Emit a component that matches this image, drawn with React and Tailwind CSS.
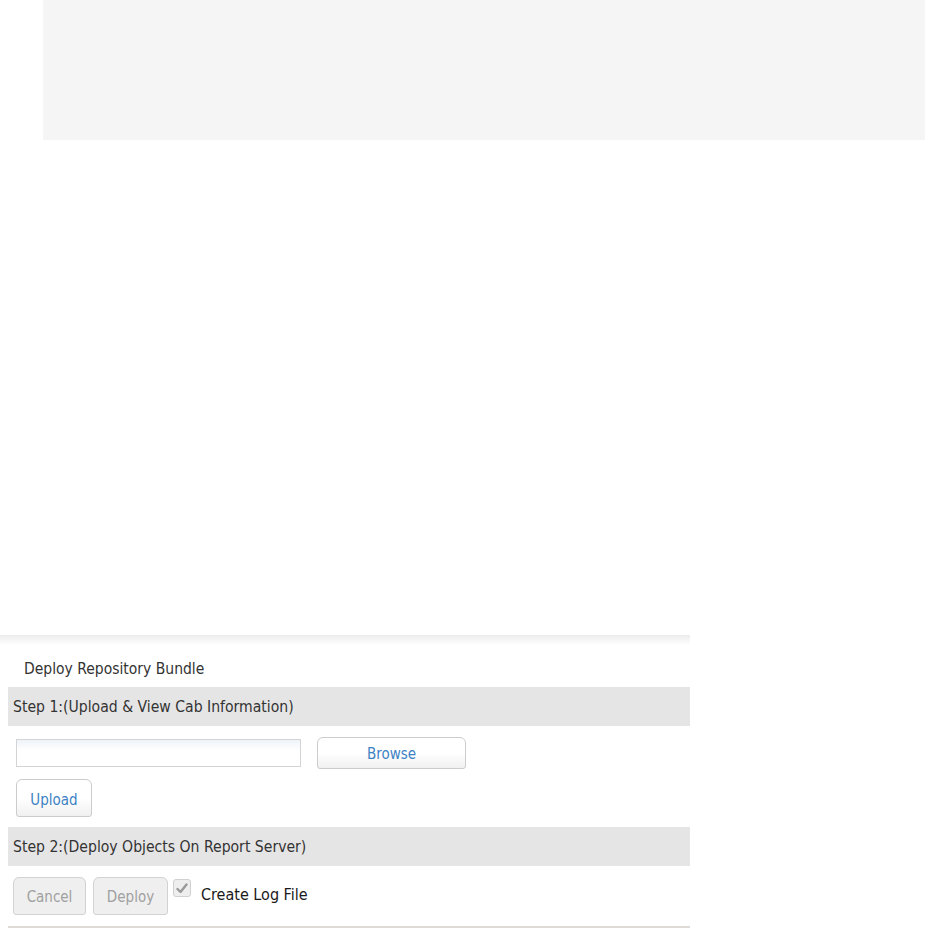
export default function App() {
  const font = { fontFamily: '"Liberation Sans Narrow", "DejaVu Sans Condensed", Roboto, sans-serif' };

  return (
    <div className="w-[925px] h-[933px] bg-white overflow-hidden relative" style={font}>
      {/* top panel */}
      <div className="ml-[43px] h-[140px] bg-[#f5f5f5]" />

      {/* deploy section */}
      <div className="mt-[495px] w-[690px]">
        <div className="h-[10px] bg-gradient-to-b from-[#ececec] to-white" />
        <div className="pl-[24px] pt-[13px] h-[42px] text-[15.5px] text-[#333]">Deploy Repository Bundle</div>

        <div className="ml-[8px] h-[39px] bg-[#e5e5e5] flex items-center pl-[5px] pt-[3px] text-[15.6px] text-[#333]">
          Step 1:(Upload &amp; View Cab Information)
        </div>

        <div className="ml-[16px] mt-[11px] flex items-center gap-[16px]">
          <input
            type="text"
            className="w-[285px] h-[28px] border border-[#d4d4d4] bg-gradient-to-b from-[#eef3f9] to-white to-40% outline-none"
          />
          <button className="w-[149px] h-[32px] pt-[3px] rounded-t-[6px] rounded-b-[3px] border border-[#cccccc] bg-gradient-to-b from-white via-white to-[#f0f0f0] text-[15px] text-[#3d82c4]">
            Browse
          </button>
        </div>

        <div className="ml-[16px] mt-[10px]">
          <button className="w-[76px] h-[38px] pt-[4px] rounded-t-[6px] rounded-b-[3px] border border-[#cccccc] bg-gradient-to-b from-white via-white to-[#f0f0f0] text-[15px] text-[#3d82c4]">
            Upload
          </button>
        </div>

        <div className="ml-[8px] mt-[10px] h-[39px] bg-[#e5e5e5] flex items-center pl-[5px] pt-[3px] text-[15.6px] text-[#333]">
          Step 2:(Deploy Objects On Report Server)
        </div>

        <div className="ml-[13px] mt-[11px] flex items-start gap-[7px]">
          <button className="w-[73px] h-[38px] pt-[3px] rounded-t-[6px] rounded-b-[3px] border border-[#d2d2d2] bg-[#efefef] text-[15px] text-[#a0a0a0]">
            Cancel
          </button>
          <button className="w-[75px] h-[38px] pt-[3px] rounded-t-[6px] rounded-b-[3px] border border-[#d2d2d2] bg-[#efefef] text-[15px] text-[#a0a0a0]">
            Deploy
          </button>
          <div className="flex items-start gap-[10px] -ml-[2px] mt-[2px]">
            <span className="w-[18px] h-[18px] rounded-[3px] border border-[#d0d0d0] bg-[#eeeeee] flex items-center justify-center">
              <svg width="12" height="11" viewBox="0 0 12 11">
                <path d="M1.5 6 L4.5 9 L10.5 1.5" fill="none" stroke="#9a9a9a" strokeWidth="2.4" strokeLinecap="round" strokeLinejoin="round" />
              </svg>
            </span>
            <span className="text-[16px] text-[#1a1a1a] mt-[4px]">Create Log File</span>
          </div>
        </div>

        <div className="ml-[8px] mt-[11px] h-[2px] bg-[#dedad6]" />
      </div>
    </div>
  );
}
